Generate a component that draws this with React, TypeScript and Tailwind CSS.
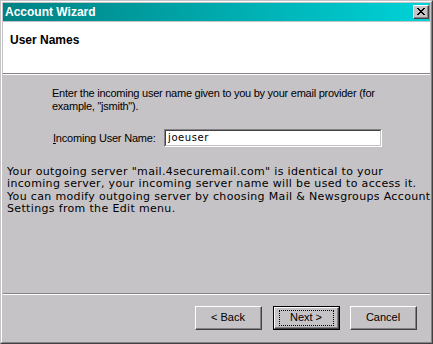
import React from 'react'

// Classic Windows 2000 style dialog: "Account Wizard" / User Names page

const face = 'bg-[#c6c3c6]'

function Button({ label, isDefault = false }: { label: string; isDefault?: boolean }) {
  const inner = (
    <div className="h-full w-full border-t border-l border-t-white border-l-white border-r border-b border-r-[#424142] border-b-[#424142]">
      <div className="h-full w-full border-r border-b border-r-[#848284] border-b-[#848284] flex items-center justify-center">
        {isDefault ? (
          <div className="flex items-center justify-center w-[55px] h-[16px] border border-dotted border-black">
            <span>{label}</span>
          </div>
        ) : (
          <span>{label}</span>
        )}
      </div>
    </div>
  )
  return (
    <div
      className={`w-[67px] h-[24px] ${face} text-black text-[11px] font-['Liberation_Sans',Arial,sans-serif] ${
        isDefault ? 'border border-black' : ''
      }`}
    >
      {inner}
    </div>
  )
}

export default function App() {
  return (
    <div className="w-[433px] h-[344px] overflow-hidden font-['Liberation_Sans',Arial,sans-serif]">
      {/* outer frame */}
      <div className="w-full h-full border-t border-l border-t-[#c6c3c6] border-l-[#c6c3c6] border-r border-b border-r-[#424142] border-b-[#424142]">
        <div className="w-full h-full border-t border-l border-t-white border-l-white border-r border-b border-r-[#848284] border-b-[#848284]">
          <div className={`w-full h-full p-px ${face} flex flex-col`}>
            {/* Title bar */}
            <div className="h-[18px] shrink-0 bg-gradient-to-r from-[#008284] to-[#00d3d8] flex items-center justify-between pl-[2px] pr-[1px]">
              <span className="text-white font-bold text-[12px] leading-none">Account Wizard</span>
              <div className={`w-[16px] h-[14px] ${face} border-t border-l border-t-white border-l-white border-r border-b border-r-[#424142] border-b-[#424142]`}>
                <div className="w-full h-full border-r border-b border-r-[#848284] border-b-[#848284] flex items-center justify-center">
                  <svg width="8" height="7" viewBox="0 0 8 7" shapeRendering="crispEdges">
                    <path d="M0 0h2v1h-2zM6 0h2v1h-2zM1 1h2v1h-2zM5 1h2v1h-2zM2 2h4v1h-4zM3 3h2v1h-2zM2 4h4v1h-4zM1 5h2v1h-2zM5 5h2v1h-2zM0 6h2v1h-2zM6 6h2v1h-2z" fill="#000" />
                  </svg>
                </div>
              </div>
            </div>

            <div className="h-px shrink-0" />

            {/* Header */}
            <div className="h-[51px] shrink-0 bg-white pl-[7px] pt-[11px]">
              <div className="text-black font-bold text-[12px] leading-[14px]">User Names</div>
            </div>
            <div className="h-px shrink-0 bg-[#848284]" />
            <div className="h-px shrink-0 bg-white" />

            {/* Body */}
            <div className="h-[218px] shrink-0 flex flex-col text-black">
              <div className="ml-[49px] mt-[12px] text-[11px] leading-[13px] tracking-[-0.25px]">
                <div className="whitespace-nowrap">Enter the incoming user name given to you by your email provider (for</div>
                <div className="whitespace-nowrap">example, "jsmith").</div>
              </div>

              <div className="ml-[50px] mt-[16px] flex items-center">
                <label className="text-[11px] leading-[13px] w-[111px] tracking-[-0.2px]">
                  <span className="underline">I</span>ncoming User Name:
                </label>
                <div className="w-[218px] h-[18px] bg-white border-t border-l border-t-[#848284] border-l-[#848284] border-r border-b border-r-white border-b-white">
                  <div className="w-full h-full border-t border-l border-t-[#424142] border-l-[#424142] border-r border-b border-r-[#c6c3c6] border-b-[#c6c3c6] flex items-center pl-[2px]">
                    <span className="text-[10px] leading-none tracking-[0.6px] font-['DejaVu_Sans',sans-serif]">joeuser</span>
                  </div>
                </div>
              </div>

              <div className="ml-[4px] mt-[19px] text-[11px] leading-[12.3px] tracking-[0.34px] font-['DejaVu_Sans',Verdana,sans-serif]">
                <div className="whitespace-nowrap">Your outgoing server "mail.4securemail.com" is identical to your</div>
                <div className="whitespace-nowrap">incoming server, your incoming server name will be used to access it.</div>
                <div className="whitespace-nowrap">You can modify outgoing server by choosing Mail &amp; Newsgroups Account</div>
                <div className="whitespace-nowrap">Settings from the Edit menu.</div>
              </div>
            </div>

            <div className="h-px shrink-0 bg-[#848284]" />
            <div className="h-px shrink-0 bg-white" />

            {/* Footer buttons */}
            <div className="flex-1 flex justify-end items-start pt-[11px] pr-[13px]">
              <Button label="< Back" />
              <div className="ml-[11px]">
                <Button label="Next >" isDefault />
              </div>
              <div className="ml-[10px]">
                <Button label="Cancel" />
              </div>
            </div>
          </div>
        </div>
      </div>
    </div>
  )
}
